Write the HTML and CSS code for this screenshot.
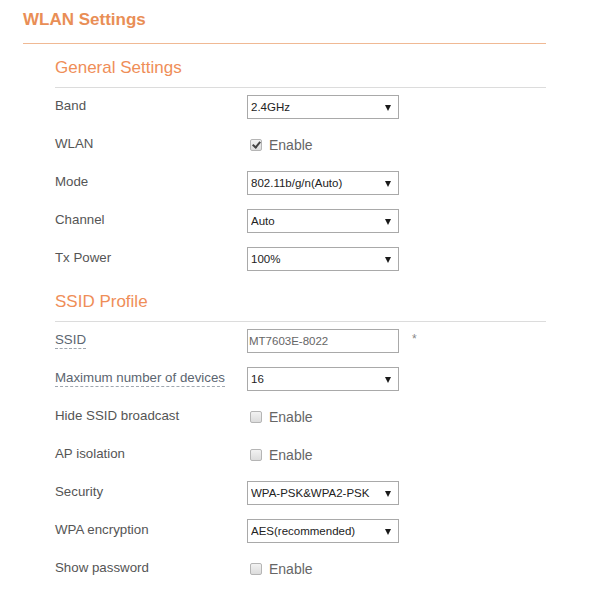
FILE: index.html
```html
<!DOCTYPE html>
<html lang="en">
<head>
<meta charset="utf-8">
<title>WLAN Settings</title>
<link rel="stylesheet" href="styles.css">
</head>
<body>
<div class="page">
  <h1 class="page-title">WLAN Settings</h1>

  <section class="section">
    <h2 class="section-title">General Settings</h2>
    <div class="row">
      <label class="label">Band</label>
      <span class="select-wrap"><select class="select"><option>2.4GHz</option></select></span>
    </div>
    <div class="row">
      <label class="label">WLAN</label>
      <label class="check"><input type="checkbox" class="checkbox" checked><span class="check-text">Enable</span></label>
    </div>
    <div class="row">
      <label class="label">Mode</label>
      <span class="select-wrap"><select class="select"><option>802.11b/g/n(Auto)</option></select></span>
    </div>
    <div class="row">
      <label class="label">Channel</label>
      <span class="select-wrap"><select class="select"><option>Auto</option></select></span>
    </div>
    <div class="row">
      <label class="label">Tx Power</label>
      <span class="select-wrap"><select class="select"><option>100%</option></select></span>
    </div>
  </section>

  <section class="section">
    <h2 class="section-title">SSID Profile</h2>
    <div class="row">
      <label class="label"><span class="hint">SSID</span></label>
      <input class="text-input" type="text" value="MT7603E-8022">
      <span class="required">*</span>
    </div>
    <div class="row">
      <label class="label"><span class="hint">Maximum number of devices</span></label>
      <span class="select-wrap"><select class="select"><option>16</option></select></span>
    </div>
    <div class="row">
      <label class="label">Hide SSID broadcast</label>
      <label class="check"><input type="checkbox" class="checkbox"><span class="check-text">Enable</span></label>
    </div>
    <div class="row">
      <label class="label">AP isolation</label>
      <label class="check"><input type="checkbox" class="checkbox"><span class="check-text">Enable</span></label>
    </div>
    <div class="row">
      <label class="label">Security</label>
      <span class="select-wrap"><select class="select"><option>WPA-PSK&amp;WPA2-PSK</option></select></span>
    </div>
    <div class="row">
      <label class="label">WPA encryption</label>
      <span class="select-wrap"><select class="select"><option>AES(recommended)</option></select></span>
    </div>
    <div class="row">
      <label class="label">Show password</label>
      <label class="check"><input type="checkbox" class="checkbox"><span class="check-text">Enable</span></label>
    </div>
  </section>
</div>
</body>
</html>
```
FILE: styles.css
```css
* { box-sizing: border-box; }
html, body { margin: 0; padding: 0; background: #fff; }
body {
  font-family: "Liberation Sans", Arial, sans-serif;
  color: #555;
}
.page {
  width: 546px;
  padding: 10px 0 0 23px;
}
.page-title {
  margin: 0;
  font-size: 17px;
  line-height: 20px;
  font-weight: bold;
  color: #e98e56;
  padding-bottom: 13px;
  border-bottom: 1px solid #f0b994;
}
.section {
  margin-left: 32px;
}
.section-title {
  margin: 14px 0 0;
  font-size: 17px;
  line-height: 20px;
  font-weight: normal;
  color: #ef8e58;
  padding-bottom: 9px;
  border-bottom: 1px solid #dcdcdc;
}
.row {
  display: flex;
  align-items: center;
  height: 38px;
}
.label {
  width: 192px;
  font-size: 13.3px;
  line-height: 16px;
  color: #555;
  position: relative;
  top: -1px;
}
.hint {
  color: #5b6570;
  border-bottom: 1px dashed #a0a8b0;
  padding-bottom: 1px;
}
.select-wrap {
  position: relative;
  display: inline-block;
}
.select-wrap::after {
  content: "";
  position: absolute;
  right: 8px;
  top: 10px;
  border-left: 3.5px solid transparent;
  border-right: 3.5px solid transparent;
  border-top: 6px solid #1a1a1a;
  pointer-events: none;
}
.select {
  -webkit-appearance: none;
  appearance: none;
  display: block;
  width: 152px;
  height: 24px;
  border: 1px solid #a9a9a9;
  border-radius: 0;
  background: #fff;
  font-family: "Liberation Sans", Arial, sans-serif;
  font-size: 11.5px;
  color: #222;
  padding: 0 0 0 3px;
  margin: 0;
}
.text-input {
  width: 152px;
  height: 24px;
  border: 1px solid #a9a9a9;
  padding: 0 0 0 1px;
  margin: 0;
  font-family: "Liberation Sans", Arial, sans-serif;
  font-size: 11.5px;
  color: #666;
}
.required {
  margin-left: 13px;
  font-size: 12px;
  color: #888;
  position: relative;
  top: -2px;
}
.check {
  display: inline-flex;
  align-items: center;
  font-size: 14px;
  color: #666;
}
.checkbox {
  -webkit-appearance: none;
  appearance: none;
  position: relative;
  width: 12px;
  height: 12px;
  margin: 0 7px 0 3px;
  border: 1px solid #b5b5b5;
  border-radius: 2px;
  background: linear-gradient(#f2f2f2, #dcdcdc);
}
.checkbox:checked::after {
  content: "";
  position: absolute;
  left: 3px;
  top: 0px;
  width: 3px;
  height: 6px;
  border-right: 2px solid #444;
  border-bottom: 2px solid #444;
  transform: rotate(40deg);
}
.check-text {
  color: #666;
}
```
